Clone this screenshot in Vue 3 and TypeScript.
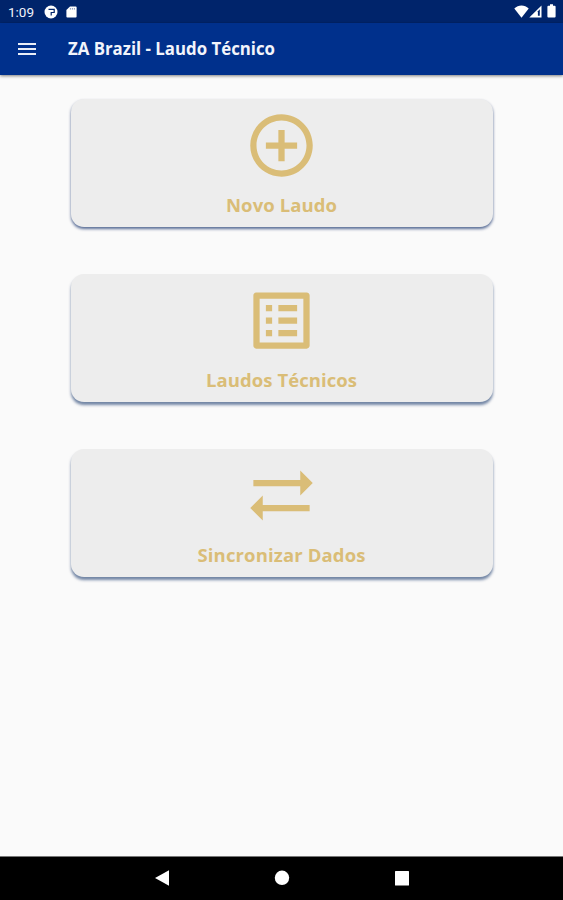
<script setup lang="ts">
interface MenuCard {
  label: string
  path: string
  width: number
}

const cards: MenuCard[] = [
  {
    label: 'Novo Laudo',
    width: 111,
    path: 'M13 7h-2v4H7v2h4v4h2v-4h4v-2h-4V7zm-1-5C6.48 2 2 6.48 2 12s4.48 10 10 10 10-4.48 10-10S17.52 2 12 2zm0 18c-4.41 0-8-3.59-8-8s3.59-8 8-8 8 3.59 8 8-3.59 8-8 8z',
  },
  {
    label: 'Laudos Técnicos',
    width: 151,
    path: 'M19 5v14H5V5h14m1.1-2H3.9c-.5 0-.9.4-.9.9v16.2c0 .4.4.9.9.9h16.2c.4 0 .9-.5.9-.9V3.9c0-.5-.5-.9-.9-.9zM11 7h6v2h-6V7zm0 4h6v2h-6v-2zm0 4h6v2h-6v-2zM7 7h2v2H7V7zm0 4h2v2H7v-2zm0 4h2v2H7v-2z',
  },
  {
    label: 'Sincronizar Dados',
    width: 168,
    path: 'M22 8l-4-4v3H3v2h15v3l4-4zM2 16l4 4v-3h15v-2H6v-3l-4 4z',
  },
]
</script>

<template>
  <div class="screen">
    <div class="status">
      <span class="time">1:09</span>
      <svg class="status-app" viewBox="0 0 14 14">
        <circle cx="7" cy="7" r="6.5" fill="#fff" />
        <path d="M4.500 4.300h5.700v3.200H7.200v3" fill="none" stroke="#00246b" stroke-width="1.200" />
      </svg>
      <svg class="status-sd" viewBox="0 0 11 12">
        <path d="M4 .4h5.6q1 0 1 1v9.2q0 1-1 1H1.4q-1 0-1-1V4z" fill="#fff" />
        <path d="M4.4 2v1.600M6.4 2v1.600M8.4 2v1.600" stroke="#6f80ac" stroke-width=".8" />
      </svg>
      <span class="spacer"></span>
      <svg class="wifi" viewBox="0 0 15 13">
        <path d="M7.5 12.8.3 3.6C4.4-.4 10.600-.4 14.700 3.600z" fill="#fff" />
      </svg>
      <svg class="signal" viewBox="0 0 13 13">
        <path d="M12.500.4v12.200H.3z" fill="#fff" />
        <path d="M10.800 4.300v6.400H8.900V6.200z" fill="#00246b" />
      </svg>
      <svg class="battery" viewBox="0 0 9 14">
        <path d="M3 .3h3v1.400h1.600q1 0 1 1v9.800q0 1-1 1H1.400q-1 0-1-1V2.700q0-1 1-1H3z" fill="#fff" />
      </svg>
    </div>

    <header class="appbar">
      <svg class="menu" viewBox="0 0 18 14">
        <path d="M0 2h18M0 7h18M0 12h18" stroke="#e9edf7" stroke-width="2" />
      </svg>
      <svg class="title" viewBox="0 0 208 24" role="heading">
        <text x="0" y="18" textLength="207" lengthAdjust="spacingAndGlyphs">ZA Brazil - Laudo Técnico</text>
      </svg>
    </header>

    <main class="content">
      <button v-for="card in cards" :key="card.label" class="card">
        <svg class="icon" viewBox="0 0 24 24"><path :d="card.path" /></svg>
        <svg class="label" viewBox="0 0 200 26">
          <text x="99.500" y="19.500" text-anchor="middle" :textLength="card.width" lengthAdjust="spacing">{{ card.label }}</text>
        </svg>
      </button>
    </main>

    <nav class="navbar">
      <svg viewBox="0 0 16 16"><path d="M15 .2v15.600L1 8z" /></svg>
      <svg viewBox="0 0 16 16"><circle cx="8" cy="7.800" r="7.200" /></svg>
      <svg viewBox="0 0 16 16"><rect x="1" y="1" width="14" height="14.500" rx=".5" /></svg>
    </nav>
  </div>
</template>

<style>
body {
  background: #fafafa;
}
</style>

<style scoped>
.screen {
  width: 563px;
  height: 900px;
  display: flex;
  flex-direction: column;
  background: #fafafa;
  font-family: "Open Sans", "Noto Sans", sans-serif;
  overflow: hidden;
}
.status {
  height: 23px;
  flex: none;
  display: flex;
  align-items: center;
  background: #00246b;
  padding: 0 7px 0 8px;
  box-sizing: border-box;
}
.time {
  width: 36px;
  font: 13.500px/23px Roboto, sans-serif;
  color: #f0f3fa;
  padding-top: 1px;
}
.status-app {
  width: 14px;
  height: 14px;
}
.status-sd {
  width: 11px;
  height: 12px;
  margin-left: 8px;
}
.spacer {
  flex: 1;
}
.wifi {
  width: 15px;
  height: 13px;
  margin-top: -1px;
}
.signal {
  width: 13px;
  height: 13px;
  margin: 0 5px 0 0;
}
.battery {
  width: 9px;
  height: 14px;
  margin-top: -1px;
}
.appbar {
  height: 52px;
  flex: none;
  display: flex;
  align-items: center;
  background: #00308c;
  padding-left: 18px;
  box-shadow: 0 1px 3px rgba(0, 0, 0, 0.5);
}
.menu {
  width: 18px;
  height: 14px;
}
.title {
  width: 208px;
  height: 24px;
  margin-left: 32px;
  overflow: visible;
}
.title text {
  fill: #f2f4fb;
  font-size: 17px;
  font-weight: 700;
}
.content {
  flex: 1;
  display: flex;
  flex-direction: column;
  gap: 47px;
  padding: 24px 70px 0 71px;
}
.card {
  height: 128px;
  border: 0;
  border-radius: 13px;
  background: #ededed;
  padding: 9px 1px 0 0;
  display: flex;
  flex-direction: column;
  align-items: center;
  box-sizing: border-box;
  font-family: inherit;
  box-shadow: 0 2px 3px rgba(0, 32, 96, 0.65);
}
.card:nth-child(n + 2) {
  box-shadow: 0 3px 3px rgba(0, 36, 92, 0.55);
}
.icon {
  width: 75px;
  height: 75px;
  fill: #dabd77;
}
.label {
  width: 200px;
  height: 26px;
  margin-top: 9px;
}
.label text {
  fill: #dabd77;
  font-size: 18.500px;
  font-weight: 700;
}
.navbar {
  height: 44px;
  flex: none;
  display: flex;
  justify-content: center;
  align-items: center;
  gap: 104px;
  background: #000;
  border-top: 1px solid #777;
  box-sizing: border-box;
  padding: 0 0 1px 0;
}
.navbar svg {
  width: 16px;
  height: 16px;
  fill: #fff;
}
</style>
